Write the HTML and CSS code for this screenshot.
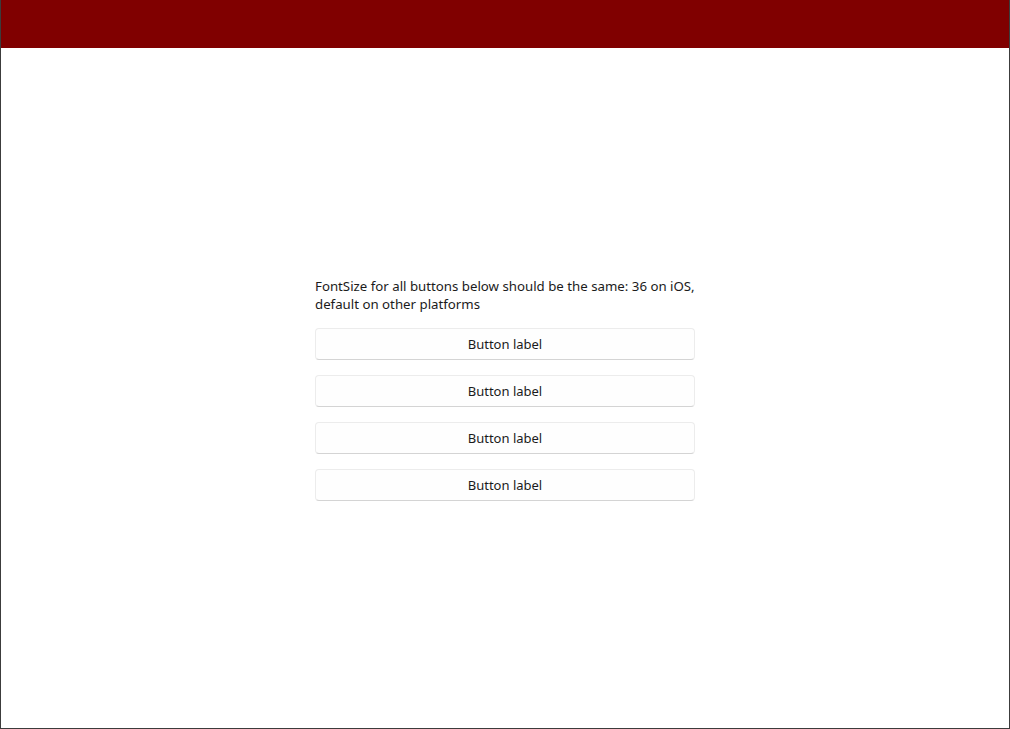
FILE: index.html
```html
<!DOCTYPE html>
<html>
<head>
<meta charset="utf-8">
<link rel="stylesheet" href="styles.css">
</head>
<body>
<div class="window">
  <header class="titlebar"></header>
  <main class="content">
    <div class="stack">
      <p class="note">FontSize for all buttons below should be the same: 36 on iOS, default on other platforms</p>
      <button class="btn">Button label</button>
      <button class="btn">Button label</button>
      <button class="btn">Button label</button>
      <button class="btn">Button label</button>
    </div>
  </main>
</div>
</body>
</html>
```
FILE: styles.css
```css
html, body {
  margin: 0;
  padding: 0;
  width: 1010px;
  height: 729px;
  overflow: hidden;
  background: #ffffff;
}
.window {
  box-sizing: border-box;
  width: 1010px;
  height: 729px;
  border: 1px solid #3c3c3c;
  border-top: none;
  display: flex;
  flex-direction: column;
  font-family: "Noto Sans", "Open Sans", sans-serif;
  color: #1b1b1b;
}
.titlebar {
  height: 48px;
  flex: none;
  background: #800000;
}
.content {
  flex: 1;
  display: flex;
  align-items: center;
  justify-content: center;
  padding-top: 2px;
}
.stack {
  width: 380px;
  display: flex;
  flex-direction: column;
  gap: 15px;
}
.note {
  margin: 0;
  font-size: 13.25px;
  line-height: 18px;
}
.btn {
  box-sizing: border-box;
  height: 32px;
  width: 380px;
  padding: 0;
  background: #fefefe;
  border: 1px solid #ececec;
  border-bottom-color: #d4d4d4;
  border-radius: 4px;
  font-family: "Noto Sans", "Open Sans", sans-serif;
  font-size: 13px;
  color: #1b1b1b;
}
```
